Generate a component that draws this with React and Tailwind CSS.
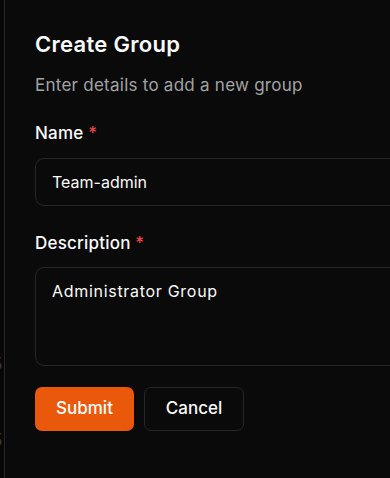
import React from 'react';

export default function App() {
  return (
    <div
      className="relative w-[390px] h-[478px] overflow-hidden bg-[#070707]"
      style={{ fontFamily: 'Inter, "Noto Sans", sans-serif' }}
    >
      {/* page behind the dialog */}
      <div className="absolute left-[-8px] top-[352px] text-[17px] leading-[24px] text-[#3a3a3a]">5</div>
      <div className="absolute left-[-8px] top-[428px] text-[17px] leading-[24px] text-[#3a3a3a]">5</div>

      {/* Dialog */}
      <div className="absolute left-[4px] top-0 h-full w-[470px] border-l border-[#262626] bg-[#0a0a0a] pl-[30px] pt-[30px]">
        <h2 className="text-[22px] leading-[28px] font-semibold tracking-[0.3px] text-[#fafafa]">Create Group</h2>
        <p className="mt-[15px] text-[17px] leading-[24px] tracking-[0.25px] text-[#a3a3a3]">Enter details to add a new group</p>

        <form className="mt-[24px]" onSubmit={(e) => e.preventDefault()}>
          <label className="block text-[17px] leading-[24px] font-medium tracking-[0.2px] text-[#fafafa]">
            Name <span className="text-[#ef4444]">*</span>
          </label>
          <input
            defaultValue="Team-admin"
            className="mt-[13px] block h-[48px] w-[420px] rounded-[9px] border border-[#262626] bg-transparent px-[16px] text-[16px] leading-[24px] text-[#fafafa] outline-none"
          />

          <label className="mt-[25px] block text-[17px] leading-[24px] font-medium tracking-[0.2px] text-[#fafafa]">
            Description <span className="text-[#ef4444]">*</span>
          </label>
          <textarea
            defaultValue="Administrator Group"
            className="mt-[12px] block h-[99px] w-[420px] resize-none rounded-[9px] border border-[#262626] bg-transparent px-[16px] py-[11px] text-[16px] leading-[24px] tracking-[0.7px] text-[#fafafa] outline-none"
          />

          <div className="mt-[21px] flex gap-[10px]">
            <button
              type="submit"
              className="h-[44px] w-[99px] rounded-[7px] bg-[#ea580c] text-[17px] font-medium text-white"
            >
              Submit
            </button>
            <button
              type="button"
              className="h-[44px] w-[100px] rounded-[7px] border border-[#262626] bg-[#0a0a0a] text-[17px] font-medium text-[#fafafa]"
            >
              Cancel
            </button>
          </div>
        </form>
      </div>
    </div>
  );
}
